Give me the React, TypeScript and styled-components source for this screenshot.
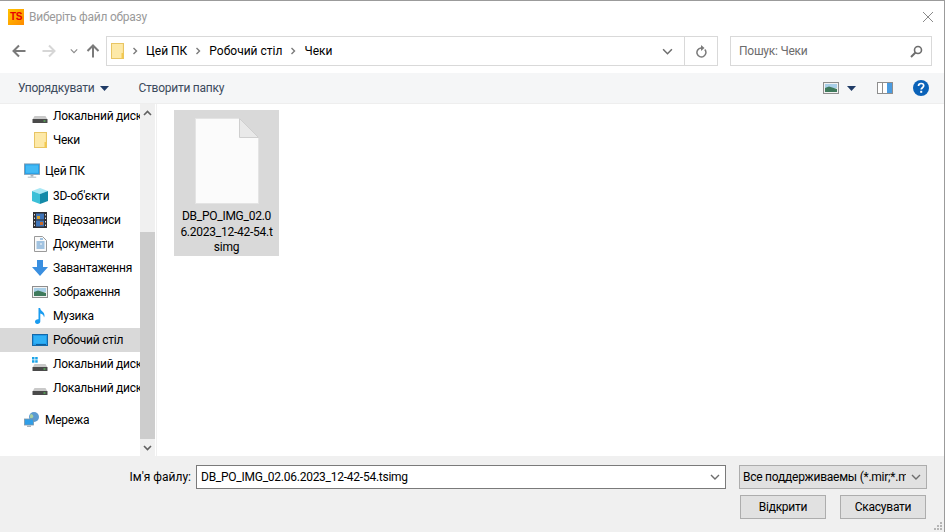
import styled, { createGlobalStyle } from "styled-components";

const GlobalStyle = createGlobalStyle`
	html, body {
		margin: 0;
		padding: 0;
		background: #ffffff;
	}
	* {
		box-sizing: border-box;
	}
`;

const Dialog = styled.div`
	width: 945px;
	height: 532px;
	display: flex;
	flex-direction: column;
	position: relative;
	overflow: hidden;
	background: #ffffff;
	border-top: 1px solid #9b9b9b;
	border-right: 1px solid #9b9b9b;
	font-family: "Roboto", "Open Sans", sans-serif;
	font-size: 12px;
	letter-spacing: -0.25px;
	color: #000000;
`;

const TitleBar = styled.div`
	height: 31px;
	display: flex;
	align-items: center;
	padding: 0 10px 0 8px;
	flex-shrink: 0;
`;

const AppLogo = styled.div`
	width: 16px;
	height: 16px;
	display: flex;
	align-items: center;
	justify-content: center;
	background: linear-gradient(135deg, #ffc400, #ff8a00);
	color: #e60000;
	font-family: "Liberation Sans", sans-serif;
	font-size: 10px;
	font-weight: 700;
	letter-spacing: -0.3px;
`;

const WindowTitle = styled.span`
	margin-left: 5px;
	color: #9a9a9a;
	flex: 1;
`;

const NavBar = styled.div`
	height: 41px;
	display: flex;
	align-items: flex-start;
	padding: 4px 12px 0 7px;
	flex-shrink: 0;
`;

const NavButtons = styled.div`
	width: 99px;
	height: 29px;
	display: flex;
	align-items: center;
`;

const NavSlot = styled.div<{ $w: number }>`
	width: ${(p) => p.$w}px;
	display: flex;
	justify-content: center;
`;

const AddressBox = styled.div`
	width: 612px;
	height: 30px;
	border: 1px solid #d9d9d9;
	display: flex;
	align-items: center;
`;

const Crumbs = styled.div`
	flex: 1;
	display: flex;
	align-items: center;
	padding-left: 4px;
	gap: 8px;
	letter-spacing: 0;
`;

const AddressAction = styled.div<{ $w: number; $line?: boolean }>`
	width: ${(p) => p.$w}px;
	height: 100%;
	display: flex;
	align-items: center;
	justify-content: center;
	border-left: ${(p) => (p.$line ? "1px solid #d9d9d9" : "none")};
`;

const SearchBox = styled.div`
	width: 202px;
	height: 30px;
	margin-left: 12px;
	border: 1px solid #d9d9d9;
	display: flex;
	align-items: center;
	justify-content: space-between;
	padding: 0 8px;
	color: #6d6d6d;
`;

const Toolbar = styled.div`
	height: 31px;
	display: flex;
	align-items: center;
	padding: 0 15px 0 18px;
	background: #f5f6f7;
	border-bottom: 1px solid #eeeeee;
	color: #3c4a5c;
	flex-shrink: 0;
`;

const ToolLabel = styled.span`
	margin-right: 6px;
`;

const NewFolder = styled.span`
	margin-left: 29px;
	flex: 1;
`;

const ToolIcons = styled.div`
	display: flex;
	align-items: center;
`;

const PaneToggle = styled.svg`
	margin-left: 14px;
`;

const HelpIcon = styled.svg`
	margin-left: 20px;
`;

const Body = styled.div`
	flex: 1;
	display: flex;
	min-height: 0;
`;

const Sidebar = styled.div`
	width: 140px;
	overflow: hidden;
	flex-shrink: 0;
`;

const TreeRow = styled.div<{ $level: number; $active?: boolean; $gap?: number }>`
	height: 24px;
	width: 140px;
	display: flex;
	align-items: center;
	gap: 5px;
	margin-top: ${(p) => p.$gap ?? 0}px;
	padding-left: ${(p) => (p.$level === 0 ? 24 : 32)}px;
	background: ${(p) => (p.$active ? "#d9d9d9" : "transparent")};
	white-space: nowrap;
	overflow: hidden;
`;

const TreeIcon = styled.span`
	width: 16px;
	height: 16px;
	flex-shrink: 0;
	display: flex;
	align-items: center;
	justify-content: center;
`;

const Scrollbar = styled.div`
	width: 15px;
	display: flex;
	flex-direction: column;
	background: #f0f0f0;
	flex-shrink: 0;
`;

const ScrollArrow = styled.div`
	height: 17px;
	display: flex;
	align-items: center;
	justify-content: center;
`;

const ScrollTrack = styled.div`
	flex: 1;
	padding-top: 111px;
	display: flex;
	flex-direction: column;
`;

const ScrollThumb = styled.div`
	flex: 1;
	background: #cdcdcd;
`;

const Files = styled.div`
	flex: 1;
	margin-left: 1px;
	padding: 6px 0 0 17px;
	border-left: 1px solid #f0f0f0;
`;

const FileTile = styled.div`
	width: 105px;
	height: 146px;
	background: #d9d9d9;
	display: flex;
	flex-direction: column;
	align-items: center;
	padding-top: 8px;
`;

const FileName = styled.div`
	width: 96px;
	margin-top: 5px;
	text-align: center;
	line-height: 15.5px;
	word-break: break-all;
	color: #000000;
`;

const Footer = styled.div`
	height: 76px;
	background: #f0f0f0;
	flex-shrink: 0;
	display: flex;
	flex-direction: column;
	padding: 9px 17px 0 0;
	position: relative;
`;

const FileRow = styled.div`
	display: flex;
	align-items: center;
	justify-content: flex-end;
`;

const FileLabel = styled.span`
	margin-right: 5px;
	letter-spacing: 0;
`;

const NameInput = styled.div`
	width: 530px;
	height: 24px;
	background: #ffffff;
	border: 1px solid #7a7a7a;
	display: flex;
	align-items: center;
	justify-content: space-between;
	padding: 0 5px 0 4px;
`;

const TypeSelect = styled.div`
	width: 188px;
	height: 24px;
	margin-left: 13px;
	background: #e1e1e1;
	border: 1px solid #adadad;
	display: flex;
	align-items: center;
	justify-content: space-between;
	padding: 0 5px 0 3px;
	white-space: nowrap;
	overflow: hidden;
`;

const TypeText = styled.span`
	width: 163px;
	overflow: hidden;
`;

const Buttons = styled.div`
	display: flex;
	justify-content: flex-end;
	gap: 14px;
	margin-top: 6px;
	padding-right: 1px;
`;

const Button = styled.div`
	width: 86px;
	height: 24px;
	background: #e1e1e1;
	border: 1px solid #adadad;
	display: flex;
	align-items: center;
	justify-content: center;
`;

const Grip = styled.svg`
	position: absolute;
	right: 1px;
	bottom: 1px;
`;

function Chevron({ color = "#666", size = 10 }: { color?: string; size?: number }) {
	return (
		<svg width={size} height={size} viewBox="0 0 10 10">
			<path d="M1 3l4 4 4-4" fill="none" stroke={color} strokeWidth="1.4" />
		</svg>
	);
}

function Arrow({ color, rotate }: { color: string; rotate: number }) {
	return (
		<svg width="14" height="14" viewBox="0 0 14 14" style={{ transform: `rotate(${rotate}deg)` }}>
			<path d="M7 1.5L1.5 7 7 12.5M2 7h11.5" fill="none" stroke={color} strokeWidth="2" />
		</svg>
	);
}

function CrumbSep() {
	return (
		<svg width="6" height="8" viewBox="0 0 6 8">
			<path d="M1.5 1l3 3-3 3" fill="none" stroke="#7a7a7a" strokeWidth="1.4" />
		</svg>
	);
}

function Caret({ color = "#1f3b66" }: { color?: string }) {
	return (
		<svg width="9" height="5" viewBox="0 0 9 5">
			<path d="M0 0h9L4.5 5z" fill={color} />
		</svg>
	);
}

function FolderIcon() {
	return (
		<svg width="13" height="16" viewBox="0 0 13 16">
			<rect x="0.5" y="0.5" width="12" height="15" fill="#ffe08c" stroke="#e8c564" />
			<rect x="1" y="1" width="10.5" height="14" fill="#fde9a8" />
			<rect x="10.5" y="10" width="2" height="5.5" fill="#f3c94f" />
		</svg>
	);
}

function DriveIcon({ windows }: { windows?: boolean }) {
	return (
		<svg width="16" height="16" viewBox="0 0 16 16">
			{windows && (
				<g fill="#1aa3e8">
					<rect x="0" y="1" width="2.5" height="2.5" />
					<rect x="3.2" y="1" width="2.5" height="2.5" />
					<rect x="0" y="4.2" width="2.5" height="2.5" />
					<rect x="3.2" y="4.2" width="2.5" height="2.5" />
				</g>
			)}
			<path d="M2.5 8h11l2 3.5H.5z" fill="#c9c9c9" />
			<rect x="0.5" y="11" width="15" height="4" rx="0.5" fill="#4a4a4a" />
			<rect x="11.5" y="12.5" width="2" height="1" fill="#5fe05f" />
		</svg>
	);
}

function PcIcon() {
	return (
		<svg width="17" height="16" viewBox="0 0 17 16">
			<rect x="0.5" y="0.5" width="16" height="11" fill="#1ea2ee" stroke="#7f9bb0" />
			<rect x="2" y="2" width="13" height="8" fill="#43baf5" />
			<rect x="7" y="12" width="3" height="2" fill="#a8b4bd" />
			<rect x="4" y="14" width="9" height="1.2" fill="#b9c3ca" />
		</svg>
	);
}

function CubeIcon() {
	return (
		<svg width="16" height="16" viewBox="0 0 16 16">
			<path d="M8 0l8 3-8 3-8-3z" fill="#a9e8f5" />
			<path d="M0 3l8 3v10l-8-3z" fill="#3cc0d8" />
			<path d="M16 3L8 6v10l8-3z" fill="#148aa8" />
		</svg>
	);
}

function FilmIcon() {
	return (
		<svg width="14" height="16" viewBox="0 0 14 16">
			<rect width="14" height="16" fill="#2f2f33" />
			<rect x="3" y="1.5" width="8" height="6" fill="#3f74b8" />
			<rect x="3" y="8.5" width="8" height="6" fill="#3f74b8" />
			<rect x="4" y="4" width="3" height="3" fill="#d8a02a" />
			<rect x="7" y="10" width="3" height="3" fill="#c86a2a" />
			<g fill="#dddddd">
				<rect x="1" y="2" width="1" height="1.5" />
				<rect x="1" y="5.5" width="1" height="1.5" />
				<rect x="1" y="9" width="1" height="1.5" />
				<rect x="1" y="12.5" width="1" height="1.5" />
				<rect x="12" y="2" width="1" height="1.5" />
				<rect x="12" y="5.5" width="1" height="1.5" />
				<rect x="12" y="9" width="1" height="1.5" />
				<rect x="12" y="12.5" width="1" height="1.5" />
			</g>
		</svg>
	);
}

function DocIcon() {
	return (
		<svg width="13" height="16" viewBox="0 0 13 16">
			<path d="M.5.5h8l4 4v11H.5z" fill="#fafafa" stroke="#9a9a9a" />
			<path d="M6 3h3M2.5 6h8M2.5 8h4M7.5 8h3M2.5 10h8M2.5 12h8" stroke="#4a8cc7" strokeWidth="1" />
		</svg>
	);
}

function DownloadIcon() {
	return (
		<svg width="16" height="16" viewBox="0 0 16 16">
			<path d="M5 0h6v7h5l-8 9-8-9h5z" fill="#3a8fe0" />
		</svg>
	);
}

function PicturesIcon() {
	return (
		<svg width="16" height="14" viewBox="0 0 16 14">
			<rect x="0.5" y="1.5" width="15" height="11" fill="#f2f2f2" stroke="#8e8e8e" />
			<rect x="2" y="3" width="12" height="4" fill="#a9cfe8" />
			<path d="M2 7l4-1.5L14 8v3H2z" fill="#3f7a5c" />
		</svg>
	);
}

function MusicIcon() {
	return (
		<svg width="12" height="16" viewBox="0 0 12 16">
			<path d="M4.5 0h1.6c.3 3 4.4 3.6 4.4 7.5 0 .8-.2 1.4-.5 2 .1-2.200-1.900-3.600-3.700-4v8c0 1.500-1.400 2.500-3 2.500S1 15 1 13.600 2.500 11 4.500 11.200z" fill="#1a9cf0" />
		</svg>
	);
}

function DesktopIcon() {
	return (
		<svg width="16" height="14" viewBox="0 0 16 14">
			<rect x="0.5" y="1.5" width="15" height="11" fill="#1e9bea" stroke="#1468a8" />
			<rect x="2" y="3" width="12" height="7.500" fill="#2fb0f5" />
			<rect x="4" y="11" width="10" height="1" fill="#0f5f9c" />
		</svg>
	);
}

function NetworkIcon() {
	return (
		<svg width="16" height="16" viewBox="0 0 16 16">
			<circle cx="10" cy="5" r="5" fill="#5b9bd0" />
			<path d="M7 2c2 .5 3 2 2 3.500-1 1-3 1-3 0 0-1.500 0-3 1-3.500z" fill="#a8d0a0" />
			<rect x="0.5" y="7" width="9" height="6" fill="#2f9ee8" stroke="#7d95a8" strokeWidth="0.8" />
			<rect x="3" y="13.500" width="4" height="1.500" fill="#a8b4bd" />
		</svg>
	);
}

const tree = [
	{ label: "Локальний диск (D:)", icon: <DriveIcon />, level: 1 },
	{ label: "Чеки", icon: <FolderIcon />, level: 1 },
	{ label: "Цей ПК", icon: <PcIcon />, level: 0, gap: 7 },
	{ label: "3D-об'єкти", icon: <CubeIcon />, level: 1, gap: 1 },
	{ label: "Відеозаписи", icon: <FilmIcon />, level: 1 },
	{ label: "Документи", icon: <DocIcon />, level: 1 },
	{ label: "Завантаження", icon: <DownloadIcon />, level: 1 },
	{ label: "Зображення", icon: <PicturesIcon />, level: 1 },
	{ label: "Музика", icon: <MusicIcon />, level: 1 },
	{ label: "Робочий стіл", icon: <DesktopIcon />, level: 1, active: true },
	{ label: "Локальний диск (C:)", icon: <DriveIcon windows />, level: 1 },
	{ label: "Локальний диск (E:)", icon: <DriveIcon />, level: 1 },
	{ label: "Мережа", icon: <NetworkIcon />, level: 0, gap: 8 },
];

export default function App() {
	return (
		<Dialog>
			<GlobalStyle />
			<TitleBar>
				<AppLogo>TS</AppLogo>
				<WindowTitle>Виберіть файл образу</WindowTitle>
				<svg width="12" height="12" viewBox="0 0 12 12">
					<path d="M1 1l10 10M11 1L1 11" stroke="#8a8a8a" strokeWidth="1" />
				</svg>
			</TitleBar>
			<NavBar>
				<NavButtons>
					<NavSlot $w={24}>
						<Arrow color="#7a7a7a" rotate={0} />
					</NavSlot>
					<NavSlot $w={36}>
						<Arrow color="#d6d6d6" rotate={180} />
					</NavSlot>
					<NavSlot $w={14}>
						<Chevron size={8} color="#8a8a8a" />
					</NavSlot>
					<NavSlot $w={24}>
						<Arrow color="#7a7a7a" rotate={90} />
					</NavSlot>
				</NavButtons>
				<AddressBox>
					<Crumbs>
						<FolderIcon />
						<CrumbSep />
						<span>Цей ПК</span>
						<CrumbSep />
						<span>Робочий стіл</span>
						<CrumbSep />
						<span>Чеки</span>
					</Crumbs>
					<AddressAction $w={33}>
						<Chevron size={11} color="#6d6d6d" />
					</AddressAction>
					<AddressAction $w={33} $line>
						<svg width="12" height="13" viewBox="0 0 12 13">
							<path d="M9.800 4.500A4.500 4.500 0 1 1 6 3H8" fill="none" stroke="#7a7a7a" strokeWidth="1.500" />
							<path d="M6 0l3.500 3L6 6z" fill="#7a7a7a" />
						</svg>
					</AddressAction>
				</AddressBox>
				<SearchBox>
					<span>Пошук: Чеки</span>
					<svg width="13" height="13" viewBox="0 0 13 13">
						<circle cx="8" cy="5" r="3.500" fill="none" stroke="#6d6d6d" strokeWidth="1.600" />
						<path d="M5.500 7.500L1 12" stroke="#6d6d6d" strokeWidth="2" />
					</svg>
				</SearchBox>
			</NavBar>
			<Toolbar>
				<ToolLabel>Упорядкувати</ToolLabel>
				<Caret />
				<NewFolder>Створити папку</NewFolder>
				<ToolIcons>
					<PicturesIcon />
					<NavSlot $w={24}>
						<Caret />
					</NavSlot>
					<PaneToggle width="16" height="12" viewBox="0 0 16 12">
						<rect x="0.500" y="0.500" width="15" height="11" fill="#ffffff" stroke="#8e8e8e" />
						<path d="M5.500 1v10" stroke="#8e8e8e" />
						<rect x="10" y="1" width="5" height="10" fill="#4a9be0" />
					</PaneToggle>
					<HelpIcon width="16" height="16" viewBox="0 0 16 16">
						<circle cx="8" cy="8" r="8" fill="#0a62b8" />
						<path d="M5.500 6c0-1.500 1-2.500 2.600-2.500S10.700 4.400 10.700 5.800c0 1.800-2.500 2-2.500 3.700" fill="none" stroke="#ffffff" strokeWidth="1.700" />
						<rect x="7.200" y="10.800" width="2" height="2" fill="#ffffff" />
					</HelpIcon>
				</ToolIcons>
			</Toolbar>
			<Body>
				<Sidebar>
					{tree.map((row) => (
						<TreeRow key={row.label} $level={row.level} $active={row.active} $gap={row.gap}>
							<TreeIcon>{row.icon}</TreeIcon>
							<span>{row.label}</span>
						</TreeRow>
					))}
				</Sidebar>
				<Scrollbar>
					<ScrollArrow>
						<svg width="9" height="6" viewBox="0 0 9 6">
							<path d="M1 5l3.500-3.500L8 5" fill="none" stroke="#606060" strokeWidth="1.600" />
						</svg>
					</ScrollArrow>
					<ScrollTrack>
						<ScrollThumb />
					</ScrollTrack>
					<ScrollArrow>
						<svg width="9" height="6" viewBox="0 0 9 6">
							<path d="M1 1l3.500 3.500L8 1" fill="none" stroke="#606060" strokeWidth="1.600" />
						</svg>
					</ScrollArrow>
				</Scrollbar>
				<Files>
					<FileTile>
						<svg width="64" height="86" viewBox="0 0 64 86">
							<path d="M.5.500h44l19 19v66H.5z" fill="#fbfbfb" stroke="#e4e4e4" />
							<path d="M44.500.500v19h19z" fill="#e9e9e9" stroke="#cfcfcf" />
						</svg>
						<FileName>DB_PO_IMG_02.06.2023_12-42-54.tsimg</FileName>
					</FileTile>
				</Files>
			</Body>
			<Footer>
				<FileRow>
					<FileLabel>Ім'я файлу:</FileLabel>
					<NameInput>
						<span>DB_PO_IMG_02.06.2023_12-42-54.tsimg</span>
						<Chevron size={10} color="#6d6d6d" />
					</NameInput>
					<TypeSelect>
						<TypeText>Все поддерживаемы (*.mir;*.mir2;*.tsimg)</TypeText>
						<Chevron size={10} color="#6d6d6d" />
					</TypeSelect>
				</FileRow>
				<Buttons>
					<Button>Відкрити</Button>
					<Button>Скасувати</Button>
				</Buttons>
				<Grip width="10" height="10" viewBox="0 0 10 10">
					<g fill="#b5b5b5">
						<rect x="7" y="1" width="2" height="2" />
						<rect x="4" y="4" width="2" height="2" />
						<rect x="7" y="4" width="2" height="2" />
						<rect x="1" y="7" width="2" height="2" />
						<rect x="4" y="7" width="2" height="2" />
						<rect x="7" y="7" width="2" height="2" />
					</g>
				</Grip>
			</Footer>
		</Dialog>
	);
}
